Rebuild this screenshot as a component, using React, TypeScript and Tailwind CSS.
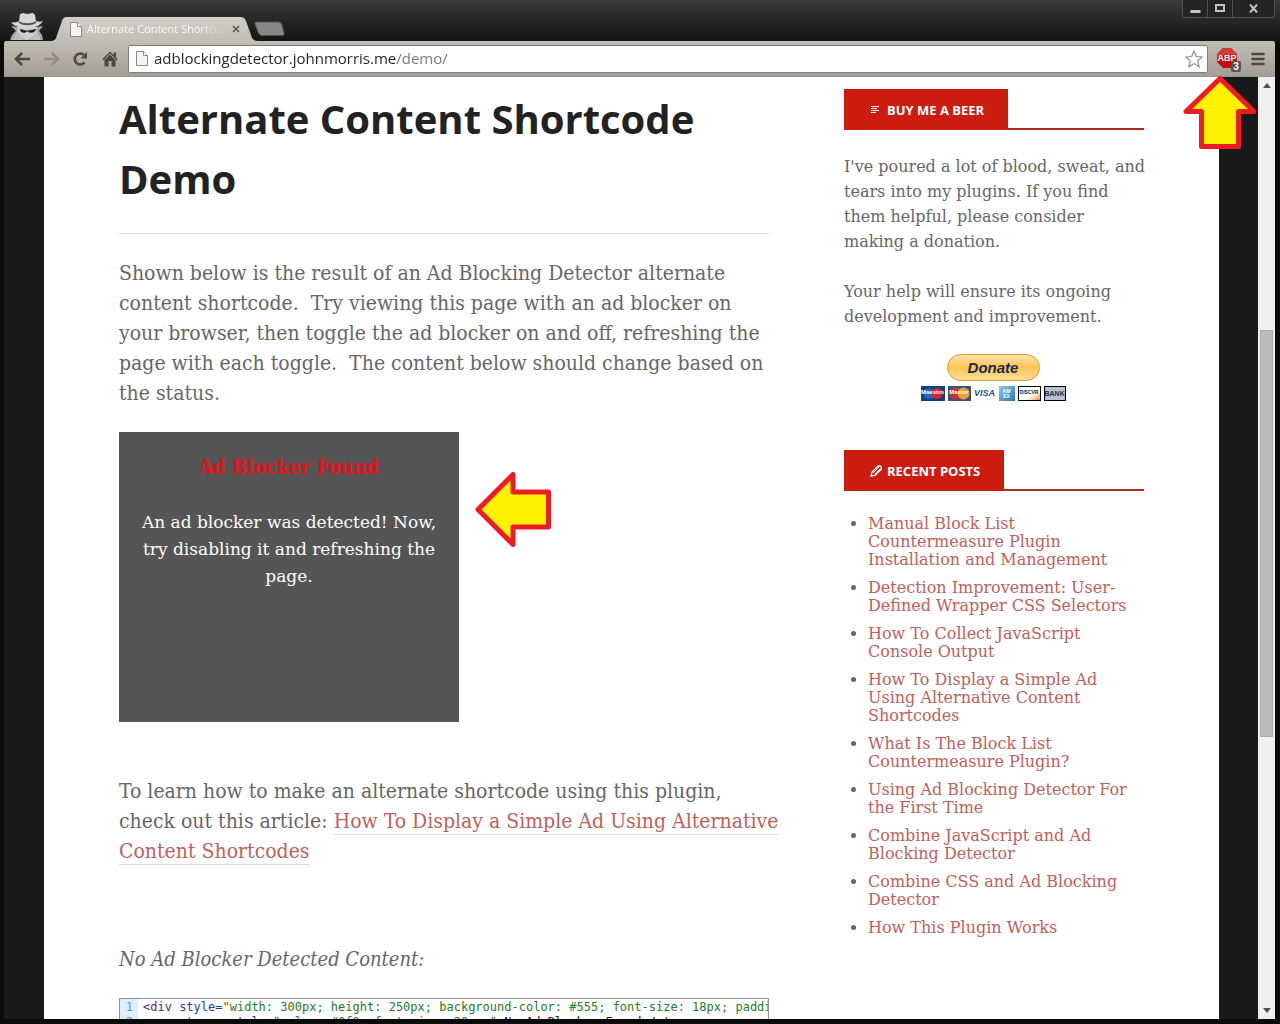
import React from "react";

const posts: string[][] = [
  ["Manual Block List", "Countermeasure Plugin", "Installation and Management"],
  ["Detection Improvement: User-", "Defined Wrapper CSS Selectors"],
  ["How To Collect JavaScript", "Console Output"],
  ["How To Display a Simple Ad", "Using Alternative Content", "Shortcodes"],
  ["What Is The Block List", "Countermeasure Plugin?"],
  ["Using Ad Blocking Detector For", "the First Time"],
  ["Combine JavaScript and Ad", "Blocking Detector"],
  ["Combine CSS and Ad Blocking", "Detector"],
  ["How This Plugin Works"],
];

function Lines({ lines }: { lines: string[] }) {
  return (
    <>
      {lines.map((line, i) => (
        <React.Fragment key={line}>
          {i > 0 && <br />}
          {line}
        </React.Fragment>
      ))}
    </>
  );
}

function PageIcon() {
  return (
    <svg width="12" height="15" viewBox="0 0 12 15" className="shrink-0" aria-hidden="true">
      <path d="M0.5 0.5H7.5L11.5 4.5V14.5H0.5Z" fill="#f4f4f4" stroke="#8a8a8a" />
      <path d="M7.5 0.5V4.5H11.5" fill="#ffffff" stroke="#8a8a8a" />
    </svg>
  );
}

function Incognito() {
  return (
    <svg width="34" height="27" viewBox="0 0 34 27" aria-hidden="true">
      <path d="M0 27C1 23 3 20 6 18L3 15L1 13L8 14H26L33 13L29 18C31 20 33 23 33 27Z" fill="#a4a4a4" />
      <path d="M7 14C7 21 11 25 17 27C23 25 27 21 27 14Z" fill="#cfcfcf" />
      <path d="M1 9C4 10 8 9 9 8L10 1L13 0L17 1L23 0L25 2L26 8C28 9 31 9 33 8C30 13 24 15 17 15C9 15 4 13 1 9Z" fill="#d6d6d6" />
      <path d="M9 8C13 11 22 11 26 8L26 10C22 13 13 13 9 10Z" fill="#555" />
      <path d="M10 16L16 17.500H18L26 16C25 20 20 21 18 18.500H17C15 21 10 20 10 16Z" fill="#1c1c1c" />
      <path d="M7 18L14 27H3ZM27 18L20 27H31Z" fill="#bdbdbd" />
    </svg>
  );
}

function WindowControls() {
  return (
    <div className="flex h-[18px] rounded-b-sm border border-t-0 border-[#505050] bg-[#242424]">
      <button aria-label="Minimize" className="flex w-[25px] items-center justify-center border-r border-[#505050]">
        <svg width="11" height="10" viewBox="0 0 11 10"><rect x="0.5" y="6" width="10" height="3" fill="#c4c4c4" /></svg>
      </button>
      <button aria-label="Maximize" className="flex w-[25px] items-center justify-center border-r border-[#505050]">
        <svg width="10" height="9" viewBox="0 0 10 9"><rect x="1" y="1" width="8" height="6" fill="none" stroke="#c4c4c4" strokeWidth="2" /></svg>
      </button>
      <button aria-label="Close" className="flex w-[41px] items-center justify-center">
        <svg width="9" height="9" viewBox="0 0 9 9"><path d="M1 0.5L8 8.5M8 0.5L1 8.5" stroke="#c4c4c4" strokeWidth="2" /></svg>
      </button>
    </div>
  );
}

function TabStrip() {
  return (
    <div className="flex h-[41px] bg-linear-to-b from-[#3a3a3a] via-[#262626] to-[#151515] pr-[5px] pl-[10px]">
      <div className="flex items-end pb-px"><Incognito /></div>
      <div className="ml-2 flex items-end">
        <div className="relative h-6 w-[206px]">
          <svg className="absolute inset-0" width="206" height="24" viewBox="0 0 206 24" aria-hidden="true">
            <defs>
              <linearGradient id="tab" x1="0" y1="0" x2="0" y2="1">
                <stop offset="0" stopColor="#d3cfc8" />
                <stop offset="1" stopColor="#c1bcb4" />
              </linearGradient>
            </defs>
            <path d="M0 24C4 23 4 21 5 18L10 4C11 1 12 0 15 0H188C191 0 193 1 194 4L199 18C200 22 202 24 206 24Z" fill="url(#tab)" />
          </svg>
          <div className="relative flex h-6 items-center pl-[18px]">
            <PageIcon />
            <span className="ml-[5px] w-[139px] overflow-hidden bg-linear-to-r from-white from-80% to-transparent bg-clip-text font-['Open_Sans',sans-serif] text-[11px] leading-5 font-medium whitespace-nowrap text-transparent">
              Alternate Content Shortcode
            </span>
            <button aria-label="Close tab" className="ml-[6px]">
              <svg width="8" height="8" viewBox="0 0 8 8"><path d="M1 1L7 7M7 1L1 7" stroke="#555" strokeWidth="1.5" /></svg>
            </button>
          </div>
        </div>
      </div>
      <button aria-label="New tab" className="-ml-1 mt-[21px] h-4">
        <svg width="31" height="16" viewBox="0 0 31 16">
          <path d="M2 1H24C26 1 27 2 28 4L30 12C30 14 30 14.500 28 14.500H8C6 14.500 5 13 4 11L1 3C1 2 1 1 2 1Z" fill="#8b8884" stroke="#55524f" />
        </svg>
      </button>
      <div className="ml-auto"><WindowControls /></div>
    </div>
  );
}

function Toolbar() {
  return (
    <div className="flex h-9 items-center rounded-t-xs border-b border-[#9b958d] bg-linear-to-b from-[#c3beb6] to-[#a39d95] pr-[10px] pl-[10px]">
      <button aria-label="Back" className="w-[17px]">
        <svg width="17" height="14" viewBox="0 0 17 14"><path d="M8 1L2 7L8 13M2 7H16" fill="none" stroke="#4b4845" strokeWidth="2.600" /></svg>
      </button>
      <button aria-label="Forward" className="ml-3 w-[17px]">
        <svg width="17" height="14" viewBox="0 0 17 14"><path d="M9 1L15 7L9 13M15 7H1" fill="none" stroke="#8f8a83" strokeWidth="2.400" /></svg>
      </button>
      <button aria-label="Reload" className="ml-3 w-4">
        <svg width="16" height="16" viewBox="0 0 16 16">
          <path d="M12.500 11.500A5.500 5.500 0 1 1 12 4" fill="none" stroke="#4b4845" strokeWidth="2.600" />
          <path d="M15 1V7.500H8.500Z" fill="#4b4845" />
        </svg>
      </button>
      <button aria-label="Home" className="ml-[14px] w-4">
        <svg width="16" height="16" viewBox="0 0 16 16">
          <path d="M8 0.500L0.500 8L1.500 9.500H2.500V15.500H6.500V10H9.500V15.500H13.500V9.500H14.500L15.500 8L14 6.500V1.500H11.500V4Z" fill="#4b4845" />
          <path d="M2.500 8.500L8 3L13.500 8.500" fill="none" stroke="#b5b0a8" />
        </svg>
      </button>
      <div className="ml-[10px] flex h-7 min-w-0 flex-1 items-center rounded-xs border border-[#827d76] bg-white pr-1 pl-[7px]">
        <PageIcon />
        <input
          type="text"
          aria-label="Address"
          defaultValue="adblockingdetector.johnmorris.me/demo/"
          className="ml-[6px] h-6 min-w-0 flex-1 bg-linear-to-r from-[#222] from-[243px] to-[#777] to-[243px] bg-clip-text pb-[2px] font-['Open_Sans',sans-serif] text-[15px] leading-5 text-transparent outline-none"
        />
        <button aria-label="Bookmark this page">
          <svg width="18" height="18" viewBox="0 0 18 18">
            <path d="M9 1L11.300 6.500L17.200 7L12.700 10.900L14.100 16.700L9 13.600L3.900 16.700L5.300 10.900L0.800 7L6.700 6.500Z" fill="#fff" stroke="#8a8a8a" strokeWidth="1.200" />
          </svg>
        </button>
      </div>
      <button aria-label="Adblock Plus, 3 blocked" className="relative ml-2 h-6 w-[26px]">
        <svg className="absolute top-0 left-0" width="22" height="22" viewBox="0 0 22 22">
          <path d="M7 1H15L21 7V15L15 21H7L1 15V7Z" fill="#c40c0c" />
          <path d="M1 11V7L7 1H15L21 7V9C14 6 7 8 1 11Z" fill="#d63a35" />
        </svg>
        <span className="absolute top-[5px] left-px w-5 text-center font-['Liberation_Sans',sans-serif] text-[9px] leading-3 font-bold text-white">ABP</span>
        <span className="absolute top-[14px] left-[15px] h-[11px] w-[10px] rounded-xs bg-[#555] text-center font-['Liberation_Sans',sans-serif] text-[10px] leading-[11px] font-bold text-white">3</span>
      </button>
      <button aria-label="Menu" className="ml-[9px]">
        <svg width="14" height="14" viewBox="0 0 14 14"><path d="M1.500 2H12.500M1.500 7H12.500M1.500 12H12.500" stroke="#4b4845" strokeWidth="2.600" strokeLinecap="round" /></svg>
      </button>
    </div>
  );
}

function WidgetTitle({ icon, children }: { icon: React.ReactNode; children: string }) {
  return (
    <div className="flex border-b-2 border-[#b3251f]">
      <h3 className="-mb-[2px] flex h-[41px] items-center bg-[#cb1c0f] pr-6 pl-[26px] font-['Open_Sans',sans-serif] text-[13px] leading-5 font-bold whitespace-nowrap text-white">
        <span className="mr-[5px] w-3">{icon}</span>
        {children}
      </h3>
    </div>
  );
}

function Donate() {
  return (
    <div className="flex flex-col items-center pr-[2px]">
      <button className="h-[27px] w-[93px] rounded-full border border-[#e59a26] bg-linear-to-b from-[#ffe2a6] via-[#ffc553] to-[#ffdc96] font-['Liberation_Sans',sans-serif] text-[15px] leading-6 font-bold text-[#1c2b4c] italic">
        Donate
      </button>
      <div className="mt-[5px] flex h-[15px] gap-[2px] font-['Liberation_Sans',sans-serif] text-[6px] leading-[13px] font-bold">
        <span className="relative w-6 bg-[#123f80] text-center text-white">
          <svg className="absolute inset-0" width="24" height="15" viewBox="0 0 24 15"><circle cx="8" cy="7.500" r="5.500" fill="#1768bb" /><circle cx="16" cy="7.500" r="5.500" fill="#e31e26" /></svg>
          <span className="relative">Maestro</span>
        </span>
        <span className="relative ml-px w-[23px] bg-[#34538c] text-center text-white">
          <svg className="absolute inset-0" width="23" height="15" viewBox="0 0 23 15"><circle cx="7.500" cy="7.500" r="6" fill="#dd2c27" /><circle cx="15.500" cy="7.500" r="6" fill="#efa12c" /></svg>
          <span className="relative">Master</span>
        </span>
        <span className="w-6 bg-white text-center text-[9px] leading-[15px] text-[#1b4f8f] italic">VISA</span>
        <span className="flex w-4 flex-col justify-center bg-linear-to-br from-[#8fc8e8] to-[#2478b8] text-center text-[5px] leading-[5px] text-white"><span>AM</span><span>EX</span></span>
        <span className="ml-px w-[23px] border border-black bg-linear-to-br from-white from-60% to-[#ee8d32] text-center text-[5px] leading-[11px] text-[#222]">DISCVR</span>
        <span className="ml-px w-[22px] border border-black bg-[#b8c2ce] text-center text-[7px] text-[#1d2c4a]">BANK</span>
      </div>
    </div>
  );
}

function Sidebar() {
  return (
    <aside className="w-[300px] shrink-0 pt-3 font-['DejaVu_Serif',serif] text-[16px] leading-[25px] whitespace-nowrap text-[#666]">
      <WidgetTitle icon={<svg width="10" height="9" viewBox="0 0 10 9"><path d="M1 1.500H9M1 3.500H7M1 5.500H9M1 7.500H6" stroke="#fff" /></svg>}>
        BUY ME A BEER
      </WidgetTitle>
      <p className="mt-6">
        <Lines lines={["I've poured a lot of blood, sweat, and", "tears into my plugins. If you find", "them helpful, please consider", "making a donation."]} />
      </p>
      <p className="mt-[25px] mb-[25px]">
        <Lines lines={["Your help will ensure its ongoing", "development and improvement."]} />
      </p>
      <Donate />
      <div className="mt-[49px]">
        <WidgetTitle
          icon={
            <svg width="12" height="12" viewBox="0 0 12 12">
              <path d="M1 11L2 7L8 1H10L11.500 2.500V4L5 10.500Z" fill="none" stroke="#fff" strokeWidth="1.300" />
              <path d="M3 8L9 2M4.500 9.500L10.500 3.500" stroke="#fff" />
            </svg>
          }
        >
          RECENT POSTS
        </WidgetTitle>
      </div>
      <ul className="mt-6 flex list-disc flex-col gap-[10px] pl-6 leading-[18px]">
        {posts.map((lines) => (
          <li key={lines[0]}>
            <a href="#post" className="text-[#c0605a]"><Lines lines={lines} /></a>
          </li>
        ))}
      </ul>
    </aside>
  );
}

function Code() {
  return (
    <pre className="mt-6 flex overflow-hidden border border-[#8a9299] bg-[#fdfdfd] font-['DejaVu_Sans_Mono',monospace] text-[12px] leading-[15px]">
      <span className="w-[18px] shrink-0 bg-[#dfefff] pr-[5px] pt-px text-right text-[#5499de]">{"1\n2"}</span>
      <code className="pt-px pl-[5px] font-['DejaVu_Sans_Mono',monospace] text-[#2b7a2b]">
        <span className="text-[#6b1f7c]">&lt;div</span> <span className="text-[#1f3fa0]">style=</span>
        {'"width: 300px; height: 250px; background-color: #555; font-size: 18px; padding: 20px;"'}
        {"\n    "}
        <span className="text-[#6b1f7c]">&lt;strong</span> <span className="text-[#1f3fa0]">style=</span>
        {'"color: #0f0; font-size: 20px;"'}
        <span className="text-[#222]">&gt;No Ad Blocker Found&lt;/strong&gt;</span>
      </code>
    </pre>
  );
}

function Article() {
  return (
    <article className="min-w-0 flex-1 pt-3 text-[21px] leading-[30px] whitespace-nowrap text-[#666]">
      <h1 className="border-b border-[#ddd] pb-6 font-['Open_Sans',sans-serif] text-[40px] leading-[60px] font-bold text-[#222]">
        <Lines lines={["Alternate Content Shortcode", "Demo"]} />
      </h1>
      <p className="mt-6">
        <Lines lines={["Shown below is the result of an Ad Blocking Detector alternate", "content shortcode.\u00a0 Try viewing this page with an ad blocker on", "your browser, then toggle the ad blocker on and off, refreshing the", "page with each toggle.\u00a0 The content below should change based on", "the status."]} />
      </p>
      <div className="relative mt-6 h-[290px] w-[340px] bg-[#555] p-5 text-center text-[17px] leading-[27px] text-white">
        <strong className="block text-[20px] leading-[30px] text-[#e8121a]">Ad Blocker Found</strong>
        <p className="mt-[27px] font-['DejaVu_Serif',serif]">
          <Lines lines={["An ad blocker was detected! Now,", "try disabling it and refreshing the", "page."]} />
        </p>
        <svg className="absolute top-[38px] left-[355px]" width="80" height="80" viewBox="0 0 80 80" aria-hidden="true">
          <path d="M4 39.500L39 4.500V22H74.500V57H39V74.500Z" fill="#fff200" stroke="#ed1c24" strokeWidth="5" strokeLinejoin="round" />
        </svg>
      </div>
      <p className="mt-[54px]">
        To learn how to make an alternate shortcode using this plugin,
        <br />
        check out this article:{" "}
        <a href="#article" className="border-b border-[#ddd] pb-px text-[#c0605a]">
          <Lines lines={["How To Display a Simple Ad Using Alternative", "Content Shortcodes"]} />
        </a>
      </p>
      <p className="mt-[78px] text-[20px] italic">No Ad Blocker Detected Content:</p>
      <Code />
    </article>
  );
}

function Scrollbar() {
  return (
    <div className="flex w-[17px] shrink-0 flex-col items-center bg-[#f0f0f0] py-[6px]">
      <svg width="8" height="5" viewBox="0 0 8 5"><path d="M0 5L4 0L8 5Z" fill="#505050" /></svg>
      <div className="flex w-full flex-1 flex-col px-[2px]">
        <div className="flex-[242]" />
        <div className="flex-[406] border border-[#a8a8a8] bg-[#bcbcbc]" />
        <div className="flex-[271]" />
      </div>
      <svg width="8" height="5" viewBox="0 0 8 5"><path d="M0 0L4 5L8 0Z" fill="#505050" /></svg>
    </div>
  );
}

export default function App() {
  return (
    <div className="relative flex h-screen flex-col overflow-hidden bg-black">
      <TabStrip />
      <div className="flex min-h-0 flex-1 flex-col border-r-[5px] border-b-[5px] border-l-4 border-[#0b0b0b]">
        <Toolbar />
        <div className="flex min-h-0 flex-1">
          <div className="min-w-0 flex-1 overflow-hidden bg-[#191919] pr-[39px] pl-10">
            <main className="flex min-h-full gap-[75px] bg-white px-[75px] font-['DejaVu_Serif_Condensed','DejaVu_Serif',serif]">
              <Article />
              <Sidebar />
            </main>
          </div>
          <Scrollbar />
        </div>
      </div>
      <svg className="absolute top-[73px] right-5" width="80" height="80" viewBox="0 0 80 80" aria-hidden="true">
        <path d="M40 5.500L74 38.500H58.500V73.500H21.500V38.500H6Z" fill="#fff200" stroke="#ed1c24" strokeWidth="5" strokeLinejoin="round" />
      </svg>
    </div>
  );
}
